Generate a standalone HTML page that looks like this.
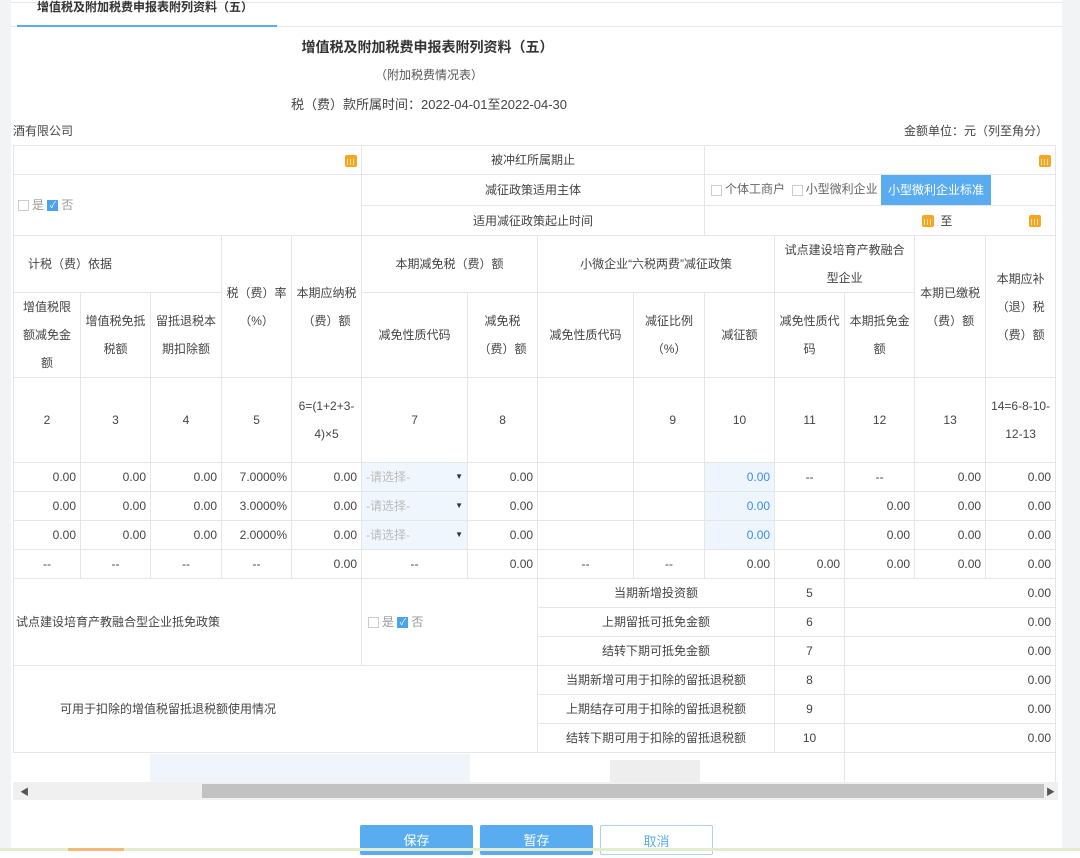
<!DOCTYPE html>
<html><head><meta charset="utf-8"><style>
*{box-sizing:border-box;margin:0;padding:0}
body{width:1080px;height:851px;overflow:hidden;background:#fff;font-family:"Liberation Sans","Noto Sans CJK SC",sans-serif;font-size:12px;color:#444;position:relative}
.a{position:absolute}
table{border-collapse:collapse;table-layout:fixed;position:absolute}
td{border:1px solid #e6e6e6;text-align:center;vertical-align:middle;line-height:28px;padding:0 4px;overflow:hidden;white-space:nowrap}
td.w{white-space:normal;line-height:28px}
td.r{text-align:right}
.sel{background:#f0f6fd;color:#bbb;text-align:left}
.blu{background:#eef5fd;color:#3a8ee6}
.cal{display:inline-block;width:12px;height:12px;background:#f5a623;border-radius:2px;vertical-align:middle;position:relative}
.cal:after{content:"";position:absolute;left:2px;top:4px;width:8px;height:6px;background:repeating-linear-gradient(90deg,#fde1a8 0 1px,transparent 1px 3px)}
.cb{display:inline-block;width:11px;height:11px;border:1px solid #ccc;vertical-align:middle;margin-right:3px;background:#fff}
.cb.on{background:#4aa3ef;border-color:#4aa3ef;color:#fff;font-size:9px;line-height:9px;text-align:center}
.btn{position:absolute;top:825px;height:30px;width:113px;color:#fff;background:#5aacf0;text-align:center;line-height:32px;font-size:13px;border-radius:2px}
</style></head><body>
<div class="a" style="left:0;top:0;width:11px;height:851px;background:#f2f3f5"></div>
<div class="a" style="left:1062px;top:0;width:18px;height:851px;background:#f2f3f5"></div>
<div class="a" style="left:11px;top:2px;width:1051px;height:1px;background:#e8e8e8"></div>
<div class="a" style="left:37px;top:0;font-size:12px;color:#333;font-weight:bold;line-height:14px">增值税及附加税费申报表附列资料（五）</div>
<div class="a" style="left:11px;top:26px;width:1051px;height:1px;background:#e8e8e8"></div>
<div class="a" style="left:17px;top:25px;width:260px;height:2px;background:#5aacf0"></div>
<div class="a" style="left:0;top:37px;width:855px;text-align:center;font-size:14px;font-weight:bold;color:#333">增值税及附加税费申报表附列资料（五）</div>
<div class="a" style="left:0;top:66px;width:858px;text-align:center;color:#555">（附加税费情况表）</div>
<div class="a" style="left:0;top:94px;width:858px;text-align:center;color:#444;font-size:13px">税（费）款所属时间：2022-04-01至2022-04-30</div>
<div class="a" style="left:13px;top:122px;color:#444">酒有限公司</div>
<div class="a" style="left:904px;top:122px;color:#444">金额单位：元（列至角分）</div>

<table style="left:13px;top:145px;width:1042px">
<col style="width:348px"><col style="width:343px"><col style="width:351px">
<tr style="height:29px"><td class="r"><span class="cal"></span></td><td>被冲红所属期止</td><td class="r"><span class="cal"></span></td></tr>
<tr style="height:31px"><td rowspan="2" style="text-align:left;color:#999"><span class="cb"></span>是 <span class="cb on">✓</span>否</td><td>减征政策适用主体</td><td style="text-align:left;padding:0 0 0 6px;color:#666"><span class="cb"></span>个体工商户 &nbsp;<span class="cb"></span>小型微利企业 <span style="display:inline-block;background:#5aacf0;color:#fff;padding:0 7px;line-height:30px;vertical-align:middle">小型微利企业标准</span></td></tr>
<tr style="height:30px"><td>适用减征政策起止时间</td><td style="padding:0 14px 0 0"><span style="margin-left:140px" class="cal"></span> &nbsp;至<span class="cal" style="float:right;margin-top:8px"></span></td></tr>
</table>

<table style="left:13px;top:235px;width:1042px">
<col style="width:67px"><col style="width:70px"><col style="width:71px"><col style="width:70px"><col style="width:70px"><col style="width:106px"><col style="width:70px"><col style="width:96px"><col style="width:71px"><col style="width:70px"><col style="width:70px"><col style="width:70px"><col style="width:71px"><col style="width:70px">
<tr style="height:57px"><td colspan="3" style="text-align:left;padding-left:14px">计税（费）依据</td><td class="w" rowspan="2">税（费）率（%）</td><td class="w" rowspan="2">本期应纳税（费）额</td><td colspan="2">本期减免税（费）额</td><td colspan="3">小微企业“六税两费”减征政策</td><td class="w" colspan="2">试点建设培育产教融合型企业</td><td class="w" rowspan="2">本期已缴税（费）额</td><td class="w" rowspan="2">本期应补（退）税（费）额</td></tr>
<tr style="height:85px"><td class="w">增值税限额减免金额</td><td class="w">增值税免抵税额</td><td class="w">留抵退税本期扣除额</td><td>减免性质代码</td><td class="w">减免税（费）额</td><td>减免性质代码</td><td class="w">减征比例（%）</td><td>减征额</td><td class="w">减免性质代码</td><td class="w">本期抵免金额</td></tr>
<tr style="height:85px"><td>2</td><td>3</td><td>4</td><td>5</td><td class="w">6=(1+2+3-4)×5</td><td>7</td><td>8</td><td></td><td style="text-align:right;padding-right:28px">9</td><td>10</td><td>11</td><td>12</td><td>13</td><td class="w">14=6-8-10-12-13</td></tr>
<tr style="height:29px"><td class="r">0.00</td><td class="r">0.00</td><td class="r">0.00</td><td class="r">7.0000%</td><td class="r">0.00</td><td class="sel">-请选择-<span style="float:right;color:#333;font-size:8px">▼</span></td><td class="r">0.00</td><td></td><td></td><td class="r blu">0.00</td><td>--</td><td>--</td><td class="r">0.00</td><td class="r">0.00</td></tr>
<tr style="height:29px"><td class="r">0.00</td><td class="r">0.00</td><td class="r">0.00</td><td class="r">3.0000%</td><td class="r">0.00</td><td class="sel">-请选择-<span style="float:right;color:#333;font-size:8px">▼</span></td><td class="r">0.00</td><td></td><td></td><td class="r blu">0.00</td><td></td><td class="r">0.00</td><td class="r">0.00</td><td class="r">0.00</td></tr>
<tr style="height:29px"><td class="r">0.00</td><td class="r">0.00</td><td class="r">0.00</td><td class="r">2.0000%</td><td class="r">0.00</td><td class="sel">-请选择-<span style="float:right;color:#333;font-size:8px">▼</span></td><td class="r">0.00</td><td></td><td></td><td class="r blu">0.00</td><td></td><td class="r">0.00</td><td class="r">0.00</td><td class="r">0.00</td></tr>
<tr style="height:29px"><td>--</td><td>--</td><td>--</td><td>--</td><td class="r">0.00</td><td>--</td><td class="r">0.00</td><td>--</td><td>--</td><td class="r">0.00</td><td class="r">0.00</td><td class="r">0.00</td><td class="r">0.00</td><td class="r">0.00</td></tr>
</table>

<table style="left:13px;top:578px;width:1042px">
<col style="width:348px"><col style="width:176px"><col style="width:237px"><col style="width:70px"><col style="width:211px">
<tr style="height:29px"><td rowspan="3" style="text-align:left;padding-left:2px">试点建设培育产教融合型企业抵免政策</td><td rowspan="3" style="text-align:left;color:#999;padding-left:6px"><span class="cb"></span>是 <span class="cb on">✓</span>否</td><td>当期新增投资额</td><td>5</td><td class="r">0.00</td></tr>
<tr style="height:29px"><td>上期留抵可抵免金额</td><td>6</td><td class="r">0.00</td></tr>
<tr style="height:29px"><td>结转下期可抵免金额</td><td>7</td><td class="r">0.00</td></tr>
<tr style="height:29px"><td colspan="2" rowspan="3" style="text-align:left;padding-left:46px">可用于扣除的增值税留抵退税额使用情况</td><td>当期新增可用于扣除的留抵退税额</td><td>8</td><td class="r">0.00</td></tr>
<tr style="height:29px"><td>上期结存可用于扣除的留抵退税额</td><td>9</td><td class="r">0.00</td></tr>
<tr style="height:29px"><td>结转下期可用于扣除的留抵退税额</td><td>10</td><td class="r">0.00</td></tr>
<tr style="height:30px"><td colspan="4" style="border-left:none"></td><td></td></tr>
</table>
<div class="a" style="left:150px;top:754px;width:320px;height:28px;background:#f0f5fb"></div>
<div class="a" style="left:610px;top:760px;width:90px;height:22px;background:#eeeeee"></div>
<div class="a" style="left:13px;top:782px;width:1045px;height:18px;background:#f0f0f0"></div>
<div class="a" style="left:202px;top:784px;width:842px;height:14px;background:#c2c2c2"></div>
<div class="a" style="left:20px;top:785px;font-size:9px;color:#555">◀</div>
<div class="a" style="left:1046px;top:785px;font-size:9px;color:#555">▶</div>
<div class="btn" style="left:360px">保存</div>
<div class="btn" style="left:480px">暂存</div>
<div class="btn" style="left:600px;background:#fff;color:#5aacf0;border:1px solid #a9d2f5">取消</div>
<div class="a" style="left:0;top:848px;width:1080px;height:3px;background:#e4ecd0"></div>
<div class="a" style="left:68px;top:848px;width:56px;height:3px;background:#f5b87a"></div>
</body></html>
